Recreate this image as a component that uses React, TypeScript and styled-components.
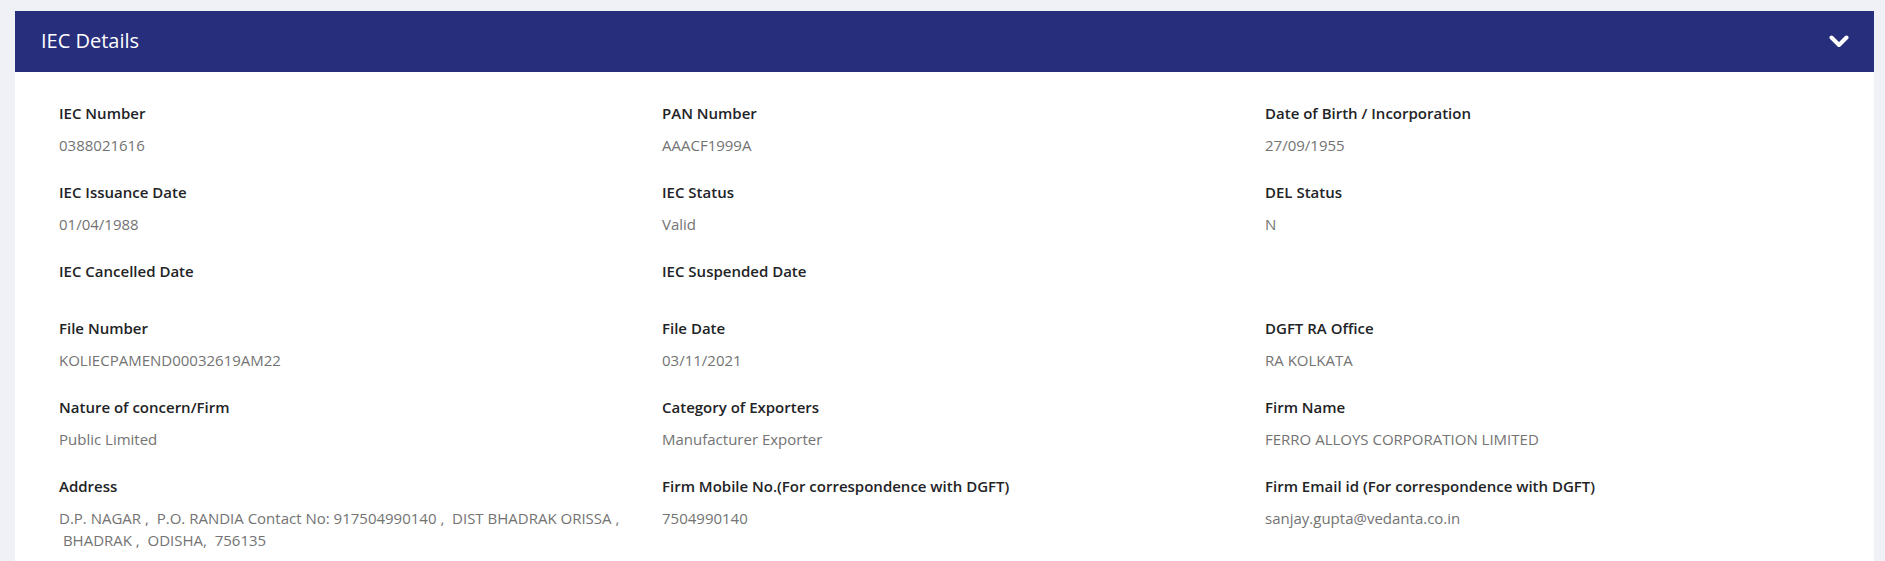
import React from "react";
import styled, { createGlobalStyle } from "styled-components";

const GlobalStyle = createGlobalStyle`
  html, body {
    margin: 0;
    padding: 0;
    background: #f0f1f6;
    font-family: "Open Sans", "Noto Sans", Arial, sans-serif;
  }
  * { box-sizing: border-box; }
`;

const Page = styled.div`
  padding: 11px 11px 0 15px;
  min-height: 561px;
`;

const Card = styled.section`
  background: #ffffff;
  min-height: 560px;
`;

const Header = styled.header`
  height: 61px;
  background: #272e7c;
  display: flex;
  align-items: center;
  justify-content: space-between;
  padding: 0 25px 2px 26px;
`;

const Title = styled.h2`
  margin: 0;
  color: #ffffff;
  font-size: 20px;
  font-weight: 400;
  line-height: 26px;
`;

const ToggleButton = styled.button`
  border: 0;
  background: transparent;
  padding: 0;
  margin-top: 2px;
  display: flex;
  align-items: center;
  cursor: pointer;
`;

const Body = styled.div`
  display: grid;
  grid-template-columns: repeat(3, 1fr);
  column-gap: 30px;
  row-gap: 25px;
  padding: 30px 36px 20px 44px;
`;

const Field = styled.div`
  display: flex;
  flex-direction: column;
  min-width: 0;
`;

const Label = styled.div`
  font-size: 15px;
  line-height: 22px;
  font-weight: 600;
  color: #222326;
  margin-bottom: 10px;
`;

const Value = styled.div`
  font-size: 15px;
  line-height: 22px;
  font-weight: 400;
  color: #737373;
  white-space: pre-wrap;
  &:empty {
    display: none;
  }
`;

type Item = { label: string; value: string };

const items: Item[] = [
  { label: "IEC Number", value: "0388021616" },
  { label: "PAN Number", value: "AAACF1999A" },
  { label: "Date of Birth / Incorporation", value: "27/09/1955" },
  { label: "IEC Issuance Date", value: "01/04/1988" },
  { label: "IEC Status", value: "Valid" },
  { label: "DEL Status", value: "N" },
  { label: "IEC Cancelled Date", value: "" },
  { label: "IEC Suspended Date", value: "" },
  { label: "", value: "" },
  { label: "File Number", value: "KOLIECPAMEND00032619AM22" },
  { label: "File Date", value: "03/11/2021" },
  { label: "DGFT RA Office", value: "RA KOLKATA" },
  { label: "Nature of concern/Firm", value: "Public Limited" },
  { label: "Category of Exporters", value: "Manufacturer Exporter" },
  { label: "Firm Name", value: "FERRO ALLOYS CORPORATION LIMITED" },
  {
    label: "Address",
    value:
      "D.P. NAGAR ,  P.O. RANDIA Contact No: 917504990140 ,  DIST BHADRAK ORISSA ,\n BHADRAK ,  ODISHA,  756135",
  },
  { label: "Firm Mobile No.(For correspondence with DGFT)", value: "7504990140" },
  { label: "Firm Email id (For correspondence with DGFT)", value: "sanjay.gupta@vedanta.co.in" },
];

const Chevron = () => (
  <svg width="20" height="13" viewBox="0 0 20 13" aria-hidden="true">
    <polyline
      points="2.5,2.5 10,10 17.5,2.5"
      fill="none"
      stroke="#ffffff"
      strokeWidth="4"
      strokeLinecap="round"
      strokeLinejoin="round"
    />
  </svg>
);

export default function App() {
  return (
    <>
      <GlobalStyle />
      <Page>
        <Card>
          <Header>
            <Title>IEC Details</Title>
            <ToggleButton aria-label="Collapse">
              <Chevron />
            </ToggleButton>
          </Header>
          <Body>
            {items.map((it, i) => (
              <Field key={i}>
                {it.label ? <Label>{it.label}</Label> : null}
                <Value>{it.value}</Value>
              </Field>
            ))}
          </Body>
        </Card>
      </Page>
    </>
  );
}
